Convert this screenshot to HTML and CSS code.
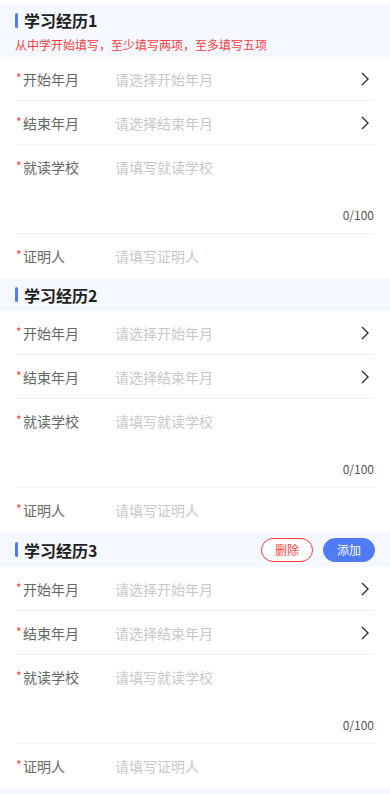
FILE: index.html
```html
<!DOCTYPE html>
<html lang="zh">
<head>
<meta charset="utf-8">
<link rel="stylesheet" href="styles.css">
</head>
<body>
<div class="page">
  <div class="top-gap"></div>

  <section class="block">
    <div class="head head-tall">
      <div class="title-line"><span class="bar"></span><span class="title">学习经历1</span></div>
      <div class="hint">从中学开始填写，至少填写两项，至多填写五项</div>
    </div>
    <div class="form">
      <div class="row"><span class="label"><i>*</i>开始年月</span><span class="ph">请选择开始年月</span><svg class="chev" viewBox="0 0 8 14"><path d="M1 1 L7 7 L1 13"/></svg></div>
      <div class="row"><span class="label"><i>*</i>结束年月</span><span class="ph">请选择结束年月</span><svg class="chev" viewBox="0 0 8 14"><path d="M1 1 L7 7 L1 13"/></svg></div>
      <div class="row row-area"><div class="area-top"><span class="label"><i>*</i>就读学校</span><span class="ph">请填写就读学校</span></div><div class="count">0/100</div></div>
      <div class="row last"><span class="label"><i>*</i>证明人</span><span class="ph">请填写证明人</span></div>
    </div>
  </section>

  <section class="block">
    <div class="head head-mid">
      <div class="title-line"><span class="bar"></span><span class="title">学习经历2</span></div>
    </div>
    <div class="form">
      <div class="row"><span class="label"><i>*</i>开始年月</span><span class="ph">请选择开始年月</span><svg class="chev" viewBox="0 0 8 14"><path d="M1 1 L7 7 L1 13"/></svg></div>
      <div class="row"><span class="label"><i>*</i>结束年月</span><span class="ph">请选择结束年月</span><svg class="chev" viewBox="0 0 8 14"><path d="M1 1 L7 7 L1 13"/></svg></div>
      <div class="row row-area"><div class="area-top"><span class="label"><i>*</i>就读学校</span><span class="ph">请填写就读学校</span></div><div class="count">0/100</div></div>
      <div class="row last"><span class="label"><i>*</i>证明人</span><span class="ph">请填写证明人</span></div>
    </div>
  </section>

  <section class="block">
    <div class="head head-btn">
      <div class="title-line"><span class="bar"></span><span class="title">学习经历3</span></div>
      <div class="actions"><button class="btn btn-del">删除</button><button class="btn btn-add">添加</button></div>
    </div>
    <div class="form">
      <div class="row"><span class="label"><i>*</i>开始年月</span><span class="ph">请选择开始年月</span><svg class="chev" viewBox="0 0 8 14"><path d="M1 1 L7 7 L1 13"/></svg></div>
      <div class="row"><span class="label"><i>*</i>结束年月</span><span class="ph">请选择结束年月</span><svg class="chev" viewBox="0 0 8 14"><path d="M1 1 L7 7 L1 13"/></svg></div>
      <div class="row row-area"><div class="area-top"><span class="label"><i>*</i>就读学校</span><span class="ph">请填写就读学校</span></div><div class="count">0/100</div></div>
      <div class="row last"><span class="label"><i>*</i>证明人</span><span class="ph">请填写证明人</span></div>
    </div>
  </section>

  <div class="foot"></div>
</div>
</body>
</html>
```

FILE: styles.css
```css
* { box-sizing: border-box; margin: 0; padding: 0; }
html, body { background: #fff; }
body {
  font-family: "Noto Sans CJK SC", "Liberation Sans", sans-serif;
  width: 390px;
  overflow: hidden;
}
.page { display: flex; flex-direction: column; }
.top-gap { height: 4px; background: #fff; }
.head {
  background: #f5f8ff;
  height: 32px;
  padding: 0 15px;
  display: flex;
  align-items: center;
}
.head-mid { height: 33px; }
.head-tall {
  height: 53px;
  flex-direction: column;
  align-items: flex-start;
  justify-content: flex-start;
  padding-top: 5px;
}
.head-btn {
  height: 35px;
  justify-content: space-between;
}
.title-line { display: flex; align-items: center; height: 22px; }
.bar {
  width: 3px;
  height: 15px;
  border-radius: 2px;
  background: #4f7cf4;
  margin-right: 6px;
}
.title {
  font-size: 16px;
  font-weight: 700;
  color: #1f1f1f;
  line-height: 22px;
}
.hint {
  font-size: 12px;
  color: #ff3b3b;
  line-height: 17px;
  margin-top: 5px;
}
.actions { display: flex; gap: 10px; }
.btn {
  width: 52px;
  height: 24px;
  border-radius: 12px;
  font-family: inherit;
  font-size: 12px;
  line-height: 22px;
  text-align: center;
}
.btn-del { border: 1px solid #ff3b3b; background: #fff; color: #ff3b3b; }
.btn-add { border: 1px solid #4f7cf4; background: #4f7cf4; color: #fff; }
.form { background: #fff; padding: 0 16px; }
.row {
  height: 44px;
  display: flex;
  align-items: center;
  border-bottom: 1px solid #f0f0f0;
}
.row.last { border-bottom: none; }
.label {
  width: 99px;
  flex: none;
  font-size: 14px;
  color: #666;
  display: flex;
  align-items: center;
}
.label i {
  font-style: normal;
  color: #ff3b3b;
  font-size: 12px;
  width: 7px;
  margin-top: -3px;
}
.ph { flex: 1; font-size: 14px; color: #c8c8c8; }
.chev { width: 8px; height: 14px; margin-right: 5px; }
.chev path { fill: none; stroke: #333; stroke-width: 1.4; }
.row-area {
  height: 89px;
  flex-direction: column;
  align-items: stretch;
}
.area-top { display: flex; align-items: center; height: 44px; }
.count {
  text-align: right;
  font-size: 12px;
  color: #555;
  margin-top: 17px;
  line-height: 17px;
}
.foot { height: 10px; background: #f5f8ff; }
```
